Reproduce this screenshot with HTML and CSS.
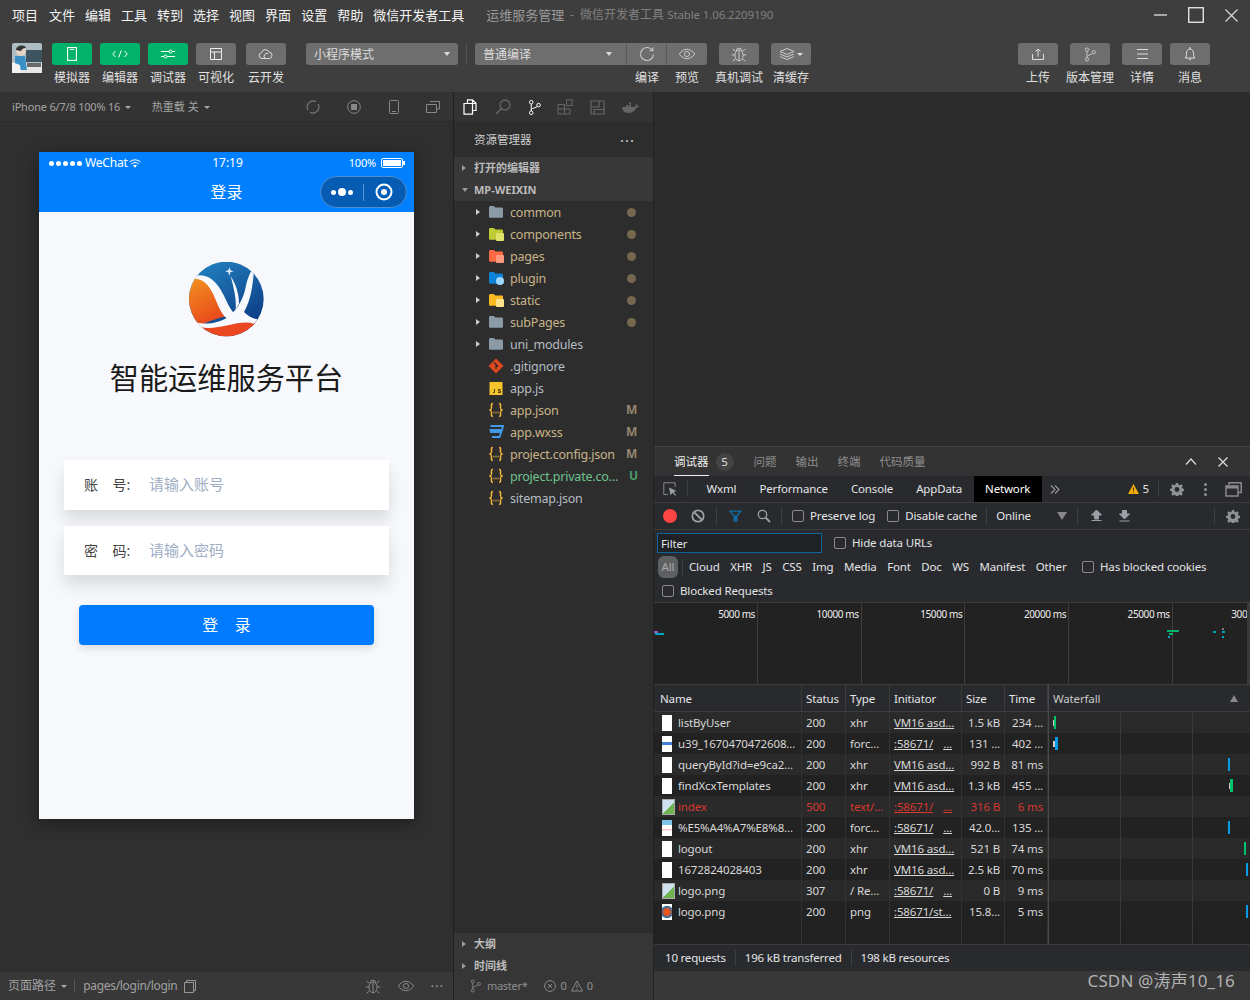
FILE: index.html
```html
<!DOCTYPE html>
<html lang="zh">
<head>
<meta charset="utf-8">
<title>微信开发者工具</title>
<link rel="stylesheet" href="styles.css">
</head>
<body>
<svg class="defs" width="0" height="0">
  <symbol id="folder" viewBox="0 0 16 14"><path d="M1 2.500C1 1.700 1.600 1 2.400 1h3.400l1.600 1.600h6.200c.8 0 1.400.6 1.400 1.400v7.400c0 .8-.6 1.400-1.400 1.400H2.400C1.600 12.800 1 12.200 1 11.400z" fill="currentColor"/></symbol>
  <symbol id="brace" viewBox="0 0 16 16"><path d="M5 1.500C3 1.500 3.500 3 3.500 5S3.500 7.500 1.500 8c2 .5 2 1 2 3s-.5 3.500 1.500 3.500M11 1.500c2 0 1.500 1.500 1.500 3.500s0 2.500 2 3c-2 .5-2 1-2 3s.5 3.500-1.500 3.500" fill="none" stroke="#f2b63c" stroke-width="1.500"/><path d="M5.500 10.500h1M7.500 10.500h1M9.500 10.500h1" stroke="#f2b63c" stroke-width="1.300"/></symbol>
  <symbol id="gear" viewBox="0 0 16 16"><path fill="currentColor" fill-rule="evenodd" d="M6.700 1h2.600l.4 2 1.300.6 1.800-1.100 1.800 1.800-1.100 1.800.6 1.300 1.900.4v2.600l-2 .4-.5 1.300 1.100 1.800-1.800 1.800-1.800-1.100-1.300.5-.4 1.900H6.700l-.4-2-1.300-.5-1.800 1.100-1.800-1.800 1.100-1.800-.5-1.300-2-.4V7.800l2-.4.5-1.300L1.400 4.300l1.800-1.800L5 3.600l1.300-.6zM8 5.700a2.800 2.800 0 1 0 0 5.600 2.800 2.800 0 0 0 0-5.600z"/></symbol>
  <symbol id="bug" viewBox="0 0 20 20"><g fill="none" stroke="currentColor" stroke-width="1.100"><ellipse cx="10" cy="11.500" rx="4.500" ry="6"/><path d="M7 6.500a3 3 0 0 1 6 0M10 6v11.500M5.500 11H2M14.500 11H18M6 7 3 4.500M14 7l3-2.500M6 15.500 3 18M14 15.500l3 2.500"/></g></symbol>
  <symbol id="eye" viewBox="0 0 20 14"><g fill="none" stroke="currentColor" stroke-width="1.100"><path d="M1 7c2.500-3.500 5.500-5.500 9-5.500S16.500 3.500 19 7c-2.500 3.500-5.500 5.500-9 5.500S3.500 10.500 1 7z"/><circle cx="10" cy="7" r="3"/></g></symbol>
  <symbol id="branch" viewBox="0 0 16 20"><g fill="none" stroke="currentColor" stroke-width="1.200"><circle cx="4" cy="3.500" r="2.200"/><circle cx="4" cy="16.500" r="2.200"/><circle cx="13" cy="7" r="2.200"/><path d="M4 5.700v8.600M4 13c1-3 6-2 7.500-4.500"/></g></symbol>
</svg>

<header class="titlebar">
  <nav class="menu">
    <span>项目</span><span>文件</span><span>编辑</span><span>工具</span><span>转到</span><span>选择</span><span>视图</span><span>界面</span><span>设置</span><span>帮助</span><span>微信开发者工具</span>
  </nav>
  <div class="wintitle"><span class="wt-main">运维服务管理</span><span class="wt-dash">-</span><span class="wt-sub">微信开发者工具 <span class="wt-ver">Stable 1.06.2209190</span></span></div>
  <div class="winctl">
    <svg class="wc-min" width="14" height="3" viewBox="0 0 14 3"><rect width="13" height="2" fill="#a8a8a8"/></svg>
    <svg class="wc-max" width="16" height="16" viewBox="0 0 16 16"><rect x=".75" y=".75" width="14.500" height="14.500" fill="none" stroke="#eee" stroke-width="1.300"/></svg>
    <svg class="wc-close" width="13" height="13" viewBox="0 0 13 13"><path d="M.5.500l12 12M12.500.500l-12 12" stroke="#ddd" stroke-width="1.100"/></svg>
  </div>
</header>

<section class="toolbar">
  <div class="avatar">
    <svg width="30" height="30" viewBox="0 0 30 30"><rect width="30" height="30" rx="2" fill="#aebcc4"/><rect x="14" y="7" width="16" height="12" fill="#3d5560"/><rect x="0" y="20" width="30" height="10" fill="#e6e6e6"/><rect x="15" y="20" width="14" height="4" fill="#6a6a6a"/><path d="M3 13h10l2 14H3z" fill="#3b8fc7"/><circle cx="9" cy="8" r="5" fill="#e4d2c2"/><path d="M4 7c0-5 9-6 10-2-3 0-4 1-5 3z" fill="#333"/><path d="M0 19l8 3 1 8H0z" fill="#f4f4f4"/></svg>
  </div>
  <div class="tool"><div class="btn green"><svg width="10" height="14" viewBox="0 0 10 14"><rect x=".6" y=".6" width="8.800" height="12.800" fill="none" stroke="#fff" stroke-width="1.100"/><path d="M3 2.500h4" stroke="#fff"/></svg></div><span class="tl">模拟器</span></div>
  <div class="tool"><div class="btn green"><svg width="16" height="8" viewBox="0 0 16 8"><path d="M3.500 1 .8 4l2.700 3M12.500 1l2.700 3-2.700 3M9.300.5 6.700 7.500" fill="none" stroke="#fff"/></svg></div><span class="tl">编辑器</span></div>
  <div class="tool"><div class="btn green"><svg width="14" height="10" viewBox="0 0 14 10"><g fill="none" stroke="#fff"><path d="M0 2.500h8M11 2.500h3M0 7.500h3M6 7.500h8"/><circle cx="9.500" cy="2.500" r="1.500"/><circle cx="4.500" cy="7.500" r="1.500"/></g></svg></div><span class="tl">调试器</span></div>
  <div class="tool m10"><div class="btn gray"><svg width="12" height="12" viewBox="0 0 12 12"><path d="M.5.500h11v11H.5zM.5 4h11M4.500 4v7.500" fill="none" stroke="#eee"/></svg></div><span class="tl">可视化</span></div>
  <div class="tool m20"><div class="btn gray"><svg width="16" height="12" viewBox="0 0 16 12"><path d="M4 10.500a3 3 0 0 1-.5-5.900A4 4 0 0 1 11 4a3.300 3.300 0 0 1 .5 6.500zM7 10.500a3 3 0 0 1 3-5" fill="none" stroke="#ddd"/></svg></div><span class="tl">云开发</span></div>

  <div class="select mode"><span class="sel-t">小程序模式</span><i class="caret"></i></div>
  <div class="vsep"></div>
  <div class="tool wide"><div class="btn gray lft select-in"><span class="sel-t">普通编译</span><i class="caret"></i></div></div>
  <div class="tool flush"><div class="btn gray mid"><svg width="16" height="16" viewBox="0 0 16 16"><path d="M13.500 4.500A6.500 6.500 0 1 0 14.500 8.500M13.800 1.500v3.300h-3.300" fill="none" stroke="#ccc" stroke-width="1.100"/></svg></div><span class="tl">编译</span></div>
  <div class="tool m12"><div class="btn gray rgt"><svg class="ic-eye" width="18" height="12"><use href="#eye"/></svg></div><span class="tl">预览</span></div>
  <div class="tool m12"><div class="btn gray"><svg class="ic-light" width="18" height="18"><use href="#bug"/></svg></div><span class="tl">真机调试</span></div>
  <div class="tool"><div class="btn gray"><svg width="16" height="12" viewBox="0 0 16 12"><path d="M8 .5 15 3.500 8 6.500 1 3.500zM1 6l7 3 7-3M1 8.500l7 3 7-3" fill="none" stroke="#ccc"/></svg><i class="caret small"></i></div><span class="tl">清缓存</span></div>

  <div class="toolbar-right">
    <div class="tool m12"><div class="btn gray"><svg width="12" height="12" viewBox="0 0 12 12"><path d="M.5 6v5.500h11V6M6 8.500V1M3.500 3.500 6 1l2.500 2.500" fill="none" stroke="#ddd"/></svg></div><span class="tl">上传</span></div>
    <div class="tool m12"><div class="btn gray"><svg class="ic-light" width="12" height="15"><use href="#branch"/></svg></div><span class="tl">版本管理</span></div>
    <div class="tool"><div class="btn gray"><svg width="11" height="10" viewBox="0 0 11 10"><path d="M0 .5h11M0 5h11M0 9.500h11" stroke="#ddd"/></svg></div><span class="tl">详情</span></div>
    <div class="tool"><div class="btn gray"><svg width="12" height="14" viewBox="0 0 12 14"><path d="M1 11c1.500-1 1.500-3 1.500-5S4 2 6 2s3.500 2 3.500 4 0 4 1.500 5zM6 0v2M5 12.500h2" fill="none" stroke="#ddd"/></svg></div><span class="tl">消息</span></div>
  </div>
</section>

<main class="main">
  <section class="sim">
    <div class="simbar">
      <span class="sb-device">iPhone 6/7/8 100% 16 <i class="caret small dim"></i></span>
      <span class="sb-hot">热重载 关 <i class="caret small dim"></i></span>
      <div class="sb-icons">
        <svg width="14" height="14" viewBox="0 0 14 14"><path d="M2 10A6 6 0 0 1 10 1.700M12 4a6 6 0 0 1-8 8.300" fill="none" stroke="#777" stroke-width="1.200"/></svg>
        <svg width="14" height="14" viewBox="0 0 14 14"><circle cx="7" cy="7" r="6.300" fill="none" stroke="#888"/><rect x="4" y="4" width="6" height="6" fill="#888"/></svg>
        <svg width="10" height="14" viewBox="0 0 10 14"><rect x=".5" y=".5" width="9" height="13" rx="1" fill="none" stroke="#888"/><path d="M3 11.500h4" stroke="#888"/></svg>
        <svg width="14" height="12" viewBox="0 0 14 12"><path d="M4 .5h9.500v7.500H11M.5 3.500H10.500v8H.5z" fill="none" stroke="#888"/></svg>
      </div>
    </div>
    <div class="simbody">
      <div class="phone">
        <div class="nav">
          <div class="statusrow">
            <span class="st-left"><span class="sig"><i></i><i></i><i></i><i></i><i></i></span>WeChat<svg width="12" height="9" viewBox="0 0 12 9"><path d="M.5 3a8 8 0 0 1 11 0M2.300 5a5.500 5.500 0 0 1 7.400 0" fill="none" stroke="#fff"/><path d="M4 6.600a3 3 0 0 1 4 0L6 8.800z" fill="#fff"/></svg></span>
            <span class="st-time">17:19</span>
            <span class="st-right">100%<span class="battery"><i></i></span></span>
          </div>
          <div class="titlerow">
            <span></span>
            <span class="navtitle">登录</span>
            <div class="capsule">
              <span class="c-dots"><i></i><i class="big"></i><i></i></span>
              <span class="c-sep"></span>
              <svg width="18" height="18" viewBox="0 0 18 18"><circle cx="9" cy="9" r="7.500" fill="none" stroke="#fff" stroke-width="2"/><circle cx="9" cy="9" r="3" fill="#fff"/></svg>
            </div>
          </div>
        </div>
        <div class="login">
          <svg class="logo" width="75" height="75" viewBox="0 0 225 225">
            <defs>
              <linearGradient id="lb" x1="0.200" y1="0" x2="0.800" y2="1"><stop offset="0" stop-color="#2280bf"/><stop offset="1" stop-color="#0a357f"/></linearGradient>
              <linearGradient id="lo" x1="0.200" y1="0" x2="0.600" y2="1"><stop offset="0" stop-color="#f2901f"/><stop offset="1" stop-color="#e8431c"/></linearGradient>
              <clipPath id="lc"><circle cx="112" cy="111" r="112"/></clipPath>
            </defs>
            <g clip-path="url(#lc)">
              <rect width="225" height="225" fill="url(#lb)"/>
              <path d="M-5 45 35 45C70 55 85 110 115 162 80 170 40 185 20 195L-5 195Z" fill="url(#lo)"/>
              <path d="M20 190C80 205 150 165 205 180L170 240 60 240Z" fill="#ea4620"/>
              <path d="M15 42C60 30 90 65 110 112 120 135 130 150 142 162L112 168C92 150 85 122 72 95 58 68 45 52 18 50Z" fill="#f8f9fc"/>
              <path d="M125 42C135 60 150 85 150 125L140 142C143 115 135 80 125 42Z" fill="#f8f9fc"/>
              <path d="M15 180C60 192 105 178 125 158 145 140 160 115 168 85 172 62 178 42 188 24L195 30C190 70 188 110 165 150 178 163 190 170 207 172L195 185C150 170 90 208 32 195Z" fill="#f8f9fc"/>
              <path d="M121 15 124 25 134 28 124 31 121 42 118 31 108 28 118 25Z" fill="#dcebf6"/>
            </g>
          </svg>
          <h1 class="apptitle">智能运维服务平台</h1>
          <div class="field"><span class="f-label">账&nbsp;&nbsp;&nbsp;&nbsp;号:</span><span class="f-ph">请输入账号</span></div>
          <div class="field"><span class="f-label">密&nbsp;&nbsp;&nbsp;&nbsp;码:</span><span class="f-ph">请输入密码</span></div>
          <div class="submit">登&nbsp;&nbsp;&nbsp;&nbsp;录</div>
        </div>
      </div>
    </div>
    <footer class="simstatus">
      <span class="ss-path">页面路径 <i class="caret small dim"></i></span>
      <span class="ss-sep"></span>
      <span class="ss-page">pages/login/login</span>
      <svg class="ss-copy" width="12" height="13" viewBox="0 0 12 13"><path d="M2.500 2.500V.5h9v10h-1.500M.5 2.500h9v10h-9z" fill="none" stroke="#999"/></svg>
      <div class="ss-icons">
        <svg class="ic-dim" width="18" height="18"><use href="#bug"/></svg>
        <svg class="ic-dim" width="18" height="12"><use href="#eye"/></svg>
        <span class="ss-dots">···</span>
      </div>
    </footer>
  </section>

  <aside class="explorer">
    <div class="ex-icons">
      <svg width="16" height="16" viewBox="0 0 16 16"><path d="M5.500 4V.8h5l3.500 3.500v7.200h-3M2 4.500h8.500v10.700H2zM10.500 1v3.500H14" fill="none" stroke="#fff" stroke-width="1.200"/></svg>
      <svg width="16" height="16" viewBox="0 0 16 16"><circle cx="10" cy="6" r="5" fill="none" stroke="#666" stroke-width="1.300"/><path d="M6.500 9.500 1 15" stroke="#666" stroke-width="1.500"/></svg>
      <svg class="ic-white" width="13" height="17"><use href="#branch"/></svg>
      <svg width="16" height="16" viewBox="0 0 16 16"><path d="M1 5.500h6.500v9.500H1zM1 10h6.500M7.500 10H13v5H7.500zM9.500.8h5.700v5.700H9.500z" fill="none" stroke="#666"/></svg>
      <svg width="15" height="15" viewBox="0 0 15 15"><path d="M1 1h13v13H1zM1 7h8V1M4 14V9.500h10" fill="none" stroke="#666" stroke-width="1.200"/></svg>
      <svg width="17" height="12" viewBox="0 0 17 12"><path d="M0 6h13c.5-1 1-2 1-3 1 .5 1.500 1.500 1.500 2H17c-.5 1-1.500 1.500-2.500 1.500C13 10 10 12 6 12 2 12 .5 9 0 6z" fill="#666"/><path d="M4 4h2v2H4zM7 4h2v2H7zM7 1.500h2v2H7z" fill="#666"/></svg>
    </div>
    <div class="ex-title"><span>资源管理器</span><span class="ex-dots">···</span></div>
    <div class="ex-section"><i class="tri-r"></i>打开的编辑器</div>
    <div class="ex-section"><i class="tri-d"></i>MP-WEIXIN</div>
    <ul class="tree">
      <li class="node mod"><i class="tri-r w"></i><svg class="fo grey" width="16" height="14"><use href="#folder"/></svg><span class="name">common</span><i class="dot"></i></li>
      <li class="node mod"><i class="tri-r w"></i><span class="fo-wrap lime"><svg width="16" height="14"><use href="#folder"/></svg><b class="bdg sq"></b></span><span class="name">components</span><i class="dot"></i></li>
      <li class="node mod"><i class="tri-r w"></i><span class="fo-wrap red"><svg width="16" height="14"><use href="#folder"/></svg><b class="bdg pg"></b></span><span class="name">pages</span><i class="dot"></i></li>
      <li class="node mod"><i class="tri-r w"></i><span class="fo-wrap blue"><svg width="16" height="14"><use href="#folder"/></svg><b class="bdg pl"></b></span><span class="name">plugin</span><i class="dot"></i></li>
      <li class="node mod"><i class="tri-r w"></i><span class="fo-wrap amber"><svg width="16" height="14"><use href="#folder"/></svg><b class="bdg st"></b></span><span class="name">static</span><i class="dot"></i></li>
      <li class="node mod"><i class="tri-r w"></i><svg class="fo grey" width="16" height="14"><use href="#folder"/></svg><span class="name">subPages</span><i class="dot"></i></li>
      <li class="node"><i class="tri-r w"></i><svg class="fo grey" width="16" height="14"><use href="#folder"/></svg><span class="name">uni_modules</span></li>
      <li class="node file"><svg class="fi" width="16" height="16" viewBox="0 0 16 16"><path d="M8 .5 15.500 8 8 15.500.5 8z" fill="#e0481f"/><path d="M6 4.500 8 6.500M8 6.500V11M8 6.500l2 2" stroke="#2d2d2d" stroke-width="1.200"/></svg><span class="name">.gitignore</span></li>
      <li class="node file"><svg class="fi" width="13" height="13" viewBox="0 0 13 13"><rect width="13" height="13" fill="#f5c32c"/><path d="M5 7v3.500H3.500M11 7.500H9v1.500h2v1.500H8.500" fill="none" stroke="#4a3b05"/></svg><span class="name">app.js</span></li>
      <li class="node file mod"><svg class="fi" width="16" height="16"><use href="#brace"/></svg><span class="name">app.json</span><b class="git m">M</b></li>
      <li class="node file mod"><svg class="fi" width="14" height="14" viewBox="0 0 14 14"><path d="M1.500 1H14l-1 4H.5M1 7h11M3 12h7.500L13 5" fill="none" stroke="#3f9bea" stroke-width="1.800"/></svg><span class="name">app.wxss</span><b class="git m">M</b></li>
      <li class="node file mod"><svg class="fi" width="16" height="16"><use href="#brace"/></svg><span class="name">project.config.json</span><b class="git m">M</b></li>
      <li class="node file new"><svg class="fi" width="16" height="16"><use href="#brace"/></svg><span class="name">project.private.co...</span><b class="git u">U</b></li>
      <li class="node file"><svg class="fi" width="16" height="16"><use href="#brace"/></svg><span class="name">sitemap.json</span></li>
    </ul>
    <div class="ex-bottom">
      <div class="ex-section flat"><i class="tri-r"></i>大纲</div>
      <div class="ex-section flat"><i class="tri-r"></i>时间线</div>
      <div class="ex-status">
        <svg class="ic-dim ic-b" width="11" height="14"><use href="#branch"/></svg>
        <span class="st-branch">master*</span>
        <svg class="st-err" width="12" height="12" viewBox="0 0 12 12"><circle cx="6" cy="6" r="5.400" fill="none" stroke="#888"/><path d="M4 4l4 4M8 4l-4 4" stroke="#888"/></svg>
        <span>0</span>
        <svg width="12" height="12" viewBox="0 0 12 12"><path d="M6 1 11.500 11H.5zM6 4.500v3.500M6 9v1" fill="none" stroke="#888"/></svg>
        <span>0</span>
      </div>
    </div>
  </aside>

  <section class="rightpane">
    <div class="blank"></div>
    <div class="devtools">
      <div class="dt-tabs">
        <span class="dt-tab on">调试器</span><span class="badge">5</span>
        <span class="dt-tab">问题</span><span class="dt-tab">输出</span><span class="dt-tab">终端</span><span class="dt-tab">代码质量</span>
        <div class="dt-tabctl">
          <svg width="12" height="7" viewBox="0 0 12 7"><path d="M1 6.500 6 1l5 5.500" fill="none" stroke="#ddd" stroke-width="1.200"/></svg>
          <svg width="10" height="10" viewBox="0 0 10 10"><path d="M.5.500l9 9M9.500.500l-9 9" stroke="#ddd" stroke-width="1.200"/></svg>
        </div>
      </div>
      <div class="cd-row cd-tabs">
        <svg class="cd-insp" width="14" height="14" viewBox="0 0 14 14"><path d="M5 12.500H.8V.8h11.400V5" fill="none" stroke="#888"/><path d="M6 5.500 13.500 9l-3 1 2.500 3-1 .8-2.500-3-2 2.500z" fill="#9aa0a6"/></svg>
        <span class="cd-sep first"></span>
        <span class="cd-tab">Wxml</span><span class="cd-tab">Performance</span><span class="cd-tab">Console</span><span class="cd-tab">AppData</span><span class="cd-tab act">Network</span>
        <svg class="cd-more" width="10" height="9" viewBox="0 0 10 9"><path d="M1 .5l4 4-4 4M5 .5l4 4-4 4" fill="none" stroke="#999" stroke-width="1.100"/></svg>
        <div class="cd-end">
          <svg width="11" height="10" viewBox="0 0 11 10"><path d="M5.500 0 11 10H0z" fill="#f2ab00"/><path d="M5.500 3.500v3M5.500 7.500v1" stroke="#333"/></svg>
          <span class="warnnum">5</span>
          <span class="cd-sep"></span>
          <svg class="ic-grey" width="14" height="14"><use href="#gear"/></svg>
          <span class="cd-kebab"><i></i><i></i><i></i></span>
          <svg width="17" height="15" viewBox="0 0 17 15"><path d="M4 3V.8h12.200v9.700H13.500" fill="none" stroke="#8a8a8a" stroke-width="1.500"/><rect x="1" y="4" width="12" height="10" fill="none" stroke="#8a8a8a" stroke-width="1.500"/><rect x="1" y="4" width="12" height="2.500" fill="#8a8a8a"/></svg>
        </div>
      </div>
      <div class="cd-row cd-net">
        <i class="rec"></i>
        <svg class="nt-block" width="14" height="14" viewBox="0 0 14 14"><circle cx="7" cy="7" r="5.700" fill="none" stroke="#9aa0a6" stroke-width="1.800"/><path d="M3 3l8 8" stroke="#9aa0a6" stroke-width="1.800"/></svg>
        <span class="cd-sep"></span>
        <svg class="nt-filter" width="15" height="12" viewBox="0 0 15 12"><path d="M.5.500h14l-5 5.500v5.500h-4V6z" fill="#0f6ea8"/><path d="M3.500 1.800h8L8.200 5.500H6.800z" fill="#292a2d"/></svg>
        <svg class="nt-search" width="14" height="14" viewBox="0 0 14 14"><circle cx="5.500" cy="5.500" r="4.200" fill="none" stroke="#9aa0a6" stroke-width="1.300"/><path d="M8.500 8.500 13 13" stroke="#9aa0a6" stroke-width="1.800"/></svg>
        <span class="cd-sep"></span>
        <label class="ck"><i class="cb"></i>Preserve log</label>
        <label class="ck"><i class="cb"></i>Disable cache</label>
        <span class="cd-sep"></span>
        <span class="online">Online</span><i class="caret grey"></i>
        <span class="cd-sep"></span>
        <svg class="nt-up" width="11" height="12" viewBox="0 0 11 12"><path d="M5.500 0 10.500 5H7.500v4h-4V5H.5zM.5 10.500h10" fill="#9aa0a6" stroke="#9aa0a6"/></svg>
        <svg class="nt-down" width="11" height="12" viewBox="0 0 11 12"><path d="M3.500 0h4v4h3l-5 5-5-5h3zM.5 11h10" fill="#9aa0a6" stroke="#9aa0a6"/></svg>
        <span class="cd-sep push"></span>
        <svg class="ic-grey nt-gear" width="14" height="14"><use href="#gear"/></svg>
      </div>
      <div class="filter-panel">
        <div class="fp-row">
          <div class="filter-input">Filter</div>
          <label class="ck"><i class="cb"></i>Hide data URLs</label>
        </div>
        <div class="fp-row types">
          <span class="all">All</span><span class="t-sep"></span>
          <span>Cloud</span><span>XHR</span><span>JS</span><span>CSS</span><span>Img</span><span>Media</span><span>Font</span><span>Doc</span><span>WS</span><span>Manifest</span><span>Other</span>
          <label class="ck hb"><i class="cb"></i>Has blocked cookies</label>
        </div>
        <div class="fp-row blocked"><label class="ck"><i class="cb"></i>Blocked Requests</label></div>
      </div>
      <div class="overview">
        <div class="ov-cell"><span>5000 ms</span></div><div class="ov-cell"><span>10000 ms</span></div><div class="ov-cell"><span>15000 ms</span></div><div class="ov-cell"><span>20000 ms</span></div><div class="ov-cell"><span>25000 ms</span></div><div class="ov-cell"><span>30000 ms</span></div>
        <i class="ov-mark c1" style="left:0;top:28px;width:4px"></i><i class="ov-mark c2" style="left:1px;top:30px;width:9px"></i>
        <i class="ov-mark c3" style="left:513px;top:27px;width:12px"></i><i class="ov-mark c3" style="left:515px;top:30px;width:4px"></i><i class="ov-mark c2" style="left:514px;top:33px;width:2px"></i>
        <i class="ov-mark c2" style="left:559px;top:28px;width:3px"></i><i class="ov-mark c2" style="left:568px;top:28px;width:3px"></i><i class="ov-mark c2" style="left:568px;top:33px;width:2px"></i><i class="ov-mark c4" style="left:568px;top:25px;width:2px"></i>
      </div>
      <div class="table">
        <div class="tr th"><span class="td">Name</span><span class="td">Status</span><span class="td">Type</span><span class="td">Initiator</span><span class="td">Size</span><span class="td">Time</span><span class="td wf-h">Waterfall<i class="sort"></i></span></div>
        <div class="tr"><span class="td nm"><i class="ficon"></i>listByUser</span><span class="td">200</span><span class="td">xhr</span><span class="td ln">VM16 asd...</span><span class="td r">1.5 kB</span><span class="td r">234 ...</span><span class="td wf"><i class="bar gr" style="left:4px;width:2px"></i><i class="bar gn" style="left:5px;width:2px"></i></span></div>
        <div class="tr"><span class="td nm"><i class="ficon fi-band"></i>u39_1670470472608...</span><span class="td">200</span><span class="td">forc...</span><span class="td ln">:58671/<u class="gap"></u>...</span><span class="td r">131 ...</span><span class="td r">402 ...</span><span class="td wf"><i class="bar gr" style="left:4px;width:2px"></i><i class="bar bl" style="left:6px;width:3px"></i></span></div>
        <div class="tr"><span class="td nm"><i class="ficon"></i>queryById?id=e9ca2...</span><span class="td">200</span><span class="td">xhr</span><span class="td ln">VM16 asd...</span><span class="td r">992 B</span><span class="td r">81 ms</span><span class="td wf"><i class="bar bl" style="left:179px;width:2px"></i></span></div>
        <div class="tr"><span class="td nm"><i class="ficon"></i>findXcxTemplates</span><span class="td">200</span><span class="td">xhr</span><span class="td ln">VM16 asd...</span><span class="td r">1.3 kB</span><span class="td r">455 ...</span><span class="td wf"><i class="bar gr" style="left:180px;width:2px"></i><i class="bar gn" style="left:181px;width:3px"></i></span></div>
        <div class="tr err"><span class="td nm"><i class="ficon fi-img"></i>index</span><span class="td">500</span><span class="td">text/...</span><span class="td ln">:58671/<u class="gap"></u>...</span><span class="td r">316 B</span><span class="td r">6 ms</span><span class="td wf"></span></div>
        <div class="tr"><span class="td nm"><i class="ficon fi-pic"></i>%E5%A4%A7%E8%8...</span><span class="td">200</span><span class="td">forc...</span><span class="td ln">:58671/<u class="gap"></u>...</span><span class="td r">42.0...</span><span class="td r">135 ...</span><span class="td wf"><i class="bar bl" style="left:179px;width:2px"></i></span></div>
        <div class="tr"><span class="td nm"><i class="ficon"></i>logout</span><span class="td">200</span><span class="td">xhr</span><span class="td ln">VM16 asd...</span><span class="td r">521 B</span><span class="td r">74 ms</span><span class="td wf"><i class="bar gn" style="left:195px;width:2px"></i></span></div>
        <div class="tr"><span class="td nm"><i class="ficon"></i>1672824028403</span><span class="td">200</span><span class="td">xhr</span><span class="td ln">VM16 asd...</span><span class="td r">2.5 kB</span><span class="td r">70 ms</span><span class="td wf"><i class="bar bl" style="left:197px;width:2px"></i></span></div>
        <div class="tr"><span class="td nm"><i class="ficon fi-img"></i>logo.png</span><span class="td">307</span><span class="td">/ Re...</span><span class="td ln">:58671/<u class="gap"></u>...</span><span class="td r">0 B</span><span class="td r">9 ms</span><span class="td wf"></span></div>
        <div class="tr"><span class="td nm"><i class="ficon fi-logo"></i>logo.png</span><span class="td">200</span><span class="td">png</span><span class="td ln">:58671/st...</span><span class="td r">15.8...</span><span class="td r">5 ms</span><span class="td wf"><i class="bar bl" style="left:197px;width:2px"></i></span></div>
        <div class="tr filler"><span class="td"></span><span class="td"></span><span class="td"></span><span class="td"></span><span class="td"></span><span class="td"></span><span class="td wf"></span></div>
      </div>
      <div class="summary"><span>10 requests</span><span>196 kB transferred</span><span>198 kB resources</span></div>
    </div>
    <footer class="rightfoot"><span class="watermark">CSDN @涛声10_16</span></footer>
  </section>
</main>
</body>
</html>
```

FILE: styles.css
```css
* { box-sizing: border-box; }
html, body { margin: 0; padding: 0; }
body {
  width: 1250px; height: 1000px; overflow: hidden;
  display: flex; flex-direction: column;
  background: #2d2d2d; color: #ddd;
  font: 12px/16px "Noto Sans", "Noto Sans CJK SC", sans-serif;
}
.defs { position: absolute; }
i { display: inline-block; font-style: normal; }
ul { list-style: none; margin: 0; padding: 0; }

/* title bar */
.titlebar { height: 30px; background: #3e3e3e; display: flex; align-items: center; padding-left: 12px; flex: none; }
.menu { display: flex; gap: 10px; font-size: 13px; color: #f4f4f4; }
.menu span:first-child { margin-right: 1px; }
.wintitle { margin-left: 22px; color: #808080; font-size: 12px; white-space: pre; display: flex; align-items: center; }
.wt-main { font-size: 13px; color: #9a9a9a; }
.wt-dash { margin: 0 6px; }
.wt-ver { font-size: 11.500px; letter-spacing: -.12px; }
.winctl { margin-left: auto; display: flex; align-items: center; }
.wc-min { margin-right: 20px; }
.wc-max { margin-right: 21px; }
.wc-close { margin-right: 12px; }

/* tool bar */
.toolbar { height: 62px; background: #3e3e3e; display: flex; align-items: flex-start; padding-top: 13px; flex: none; padding-left: 12px; }
.avatar { width: 30px; height: 30px; margin-right: 10px; }
.tool { width: 40px; display: flex; flex-direction: column; align-items: center; margin-right: 8px; }
.tool.m10 { margin-right: 10px; }
.tool.m12 { margin-right: 12px; }
.tool.m20 { margin-right: 20px; }
.tool.flush { margin-right: 0; }
.btn { width: 40px; height: 22px; border-radius: 3px; display: flex; align-items: center; justify-content: center; flex: none; }
.btn.green { background: #00b26a; }
.btn.gray { background: #6e6e6e; }
.tl { margin-top: 5px; line-height: 16px; white-space: nowrap; color: #e0e0e0; font-size: 12px; }
.caret { width: 0; height: 0; border: 3.500px solid transparent; border-top: 4px solid #ddd; border-bottom: 0; }
.caret.small { border-width: 3px; border-top-width: 3.500px; border-bottom-width: 0; margin-left: 2px; vertical-align: middle; }
.caret.dim { border-top-color: #aaa; }
.caret.grey { border-width: 5px; border-top-width: 8px; border-bottom-width: 0; border-top-color: #888; margin-left: 26px; }
.select { width: 152px; height: 22px; background: #6e6e6e; border-radius: 3px; display: flex; align-items: center; justify-content: space-between; padding: 0 8px; color: #ddd; }
.sel-t { padding-top: 2px; }
.vsep { width: 1px; height: 22px; background: #555; margin: 0 8px; }
.tool.wide { width: 152px; margin-right: 0; }
.select-in { width: 152px; justify-content: space-between; padding: 0 14px 0 8px; color: #ddd; border-radius: 3px 0 0 3px; border-right: 1px solid #5a5a5a; }
.btn.gray.select-in { justify-content: space-between; }
.btn.mid { border-radius: 0; border-right: 1px solid #5a5a5a; }
.btn.rgt { border-radius: 0 3px 3px 0; }
.ic-eye, .ic-light { color: #ccc; }
.ic-dim { color: #8a8a8a; }
.ic-white { color: #fff; }
.ic-grey { color: #8e9196; }
.toolbar-right { margin-left: auto; display: flex; padding-right: 32px; }

/* main */
.main { flex: 1; display: flex; min-height: 0; }

/* simulator */
.sim { width: 454px; flex: none; display: flex; flex-direction: column; background: #2f2f2f; border-right: 1px solid #1f1f1f; }
.simbar { height: 30px; flex: none; background: #333; display: flex; align-items: center; padding-left: 12px; font-size: 11px; color: #a4a4a4; border-bottom: 1px solid #2a2a2a; }
.sb-device { letter-spacing: -.2px; }
.sb-hot { margin-left: 21px; letter-spacing: 0; }
.sb-icons { margin-left: auto; margin-right: 13px; width: 134px; display: flex; align-items: center; justify-content: space-between; }
.simbody { flex: 1; padding: 30px 39px 0; min-height: 0; }
.phone { width: 375px; height: 667px; background: #f7f8fb; box-shadow: 0 4px 16px rgba(0,0,0,.4); display: flex; flex-direction: column; }
.nav { height: 60px; background: #007fff; color: #fff; flex: none; }
.statusrow { height: 20px; display: grid; grid-template-columns: 1fr auto 1fr; align-items: center; padding: 2px 8px 0 10px; font-size: 12px; }
.st-left { display: flex; align-items: center; letter-spacing: -.2px; }
.sig { display: flex; gap: 2px; margin-right: 3px; }
.sig i { width: 5px; height: 5px; border-radius: 50%; background: #fff; }
.st-left svg { margin-left: 1px; }
.st-right { justify-self: end; display: flex; align-items: center; gap: 5px; font-size: 11px; letter-spacing: -.2px; padding-right: 3px; }
.battery { width: 22px; height: 10px; border: 1px solid #fff; border-radius: 2px; padding: 1px; position: relative; display: block; }
.battery::after { content: ""; position: absolute; right: -3px; top: 2px; width: 2px; height: 4px; background: #fff; }
.battery i { display: block; height: 100%; background: #fff; }
.titlerow { height: 40px; display: grid; grid-template-columns: 1fr auto 1fr; align-items: center; }
.navtitle { font-size: 16px; }
.capsule { justify-self: end; margin-right: 7px; width: 87px; height: 32px; border-radius: 16px; background: #055cb2; border: 1px solid #4c8fd2; display: flex; align-items: center; padding-left: 10px; }
.c-dots { display: flex; align-items: center; gap: 2px; width: 22px; }
.c-dots i { width: 5px; height: 5px; background: #fff; border-radius: 50%; }
.c-dots i.big { width: 8px; height: 8px; }
.c-sep { width: 1px; height: 17px; background: #5a93cc; margin: 0 11px 0 10px; }
.login { flex: 1; display: flex; flex-direction: column; align-items: center; padding-top: 50px; }
.logo { flex: none; display: block; }
.apptitle { margin: 21px 0 0; font-size: 29.200px; line-height: 40px; font-weight: 400; color: #1a1a1a; }
.field { width: 325px; height: 50px; background: #fff; box-shadow: 0 10px 16px rgba(0,0,0,.12); display: flex; align-items: center; padding-left: 20px; margin-top: 16px; font-size: 14px; flex: none; }
.apptitle + .field { margin-top: 62px; }
.field + .field { height: 49px; }
.f-label { width: 65px; color: #444; white-space: nowrap; }
.f-ph { color: #a0aec4; font-size: 15px; margin-top: -2px; }
.submit { width: 295px; height: 40px; margin-top: 30px; background: #007aff; border-radius: 4px; color: #fff; text-align: center; line-height: 40px; font-size: 16px; box-shadow: 0 3px 8px rgba(0,0,0,.12); }
.simstatus { height: 28px; flex: none; background: #383838; display: flex; align-items: center; padding-left: 8px; color: #a0a0a0; font-size: 12px; }
.ss-sep { width: 1px; height: 14px; background: #555; margin: 0 8px 0 7px; }
.ss-page { font-size: 12px; letter-spacing: -.3px; }
.ss-copy { margin-left: 7px; }
.ss-icons { margin-left: auto; display: flex; align-items: center; gap: 15px; padding-right: 9px; }
.ss-dots { font-size: 13px; letter-spacing: 1px; margin-left: 1px; }

/* explorer */
.explorer { width: 200px; flex: none; display: flex; flex-direction: column; background: #2d2d2d; border-right: 1px solid #222; }
.ex-icons { height: 30px; flex: none; background: #333; display: flex; align-items: center; justify-content: space-between; padding: 0 14px 0 8px; }
.ex-title { height: 35px; flex: none; display: flex; align-items: center; justify-content: space-between; padding: 0 18px 0 20px; color: #ccc; font-size: 11.500px; }
.ex-dots { font-size: 15px; color: #ccc; letter-spacing: 1px; }
.ex-section { height: 22px; flex: none; background: #383838; display: flex; align-items: center; padding-left: 8px; font-weight: 700; font-size: 11px; color: #bbb; }
.tri-r { width: 0; height: 0; border: 3px solid transparent; border-left: 4px solid #999; border-right: 0; margin-right: 8px; }
.tri-r.w { border-left-color: #ccc; margin: 0 8px 0 22px; flex: none; }
.tri-d { width: 0; height: 0; border: 3.500px solid transparent; border-top: 4px solid #999; border-bottom: 0; margin-right: 6px; }
.tree { flex: none; }
.node { height: 22px; display: flex; align-items: center; font-size: 12.500px; letter-spacing: -.2px; color: #b4bcc2; position: relative; }
.node.mod .name { color: #c9b489; }
.node.new .name { color: #6dc28f; }
.node.file { padding-left: 34px; }
.name { margin-left: 6px; white-space: nowrap; padding-top: 1px; }
.fo { flex: none; margin-left: 0; }
.fo.grey { color: #8b9ba6; }
.fo-wrap { position: relative; width: 16px; height: 14px; flex: none; display: block; }
.fo-wrap svg { display: block; }
.lime { color: #c0ca33; } .red { color: #ff6a45; } .blue { color: #0b83d6; } .amber { color: #fbba21; }
.bdg { position: absolute; right: 0; bottom: 0; width: 8px; height: 8px; border-radius: 1px; }
.bdg.sq { background: #dde36b; }
.bdg.pg { background: #ff9a80; }
.bdg.pl { background: #9fd8ff; border-radius: 50%; }
.bdg.st { background: #ffe28a; }
.fi { flex: none; width: 16px; }
.dot { position: absolute; left: 173px; width: 9px; height: 9px; border-radius: 50%; background: #75684f; }
.git { position: absolute; left: 172px; font-size: 12px; font-weight: 700; letter-spacing: 0; }
.git.m { color: #948670; }
.git.u { left: 175px; color: #4e9a6e; }
.ex-bottom { margin-top: auto; background: #363636; display: flex; flex-direction: column; }
.ex-section.flat { background: transparent; }
.ex-status { height: 23px; display: flex; align-items: center; gap: 4px; padding: 0 0 5px 16px; color: #8f8f8f; font-size: 11px; }
.ic-b { margin-right: 2px; }
.st-branch { letter-spacing: -.3px; }
.st-err { margin-left: 13px; }

/* right */
.rightpane { flex: 1; display: flex; flex-direction: column; min-width: 0; }
.blank { flex: 1; background: #2c2c2c; }
.devtools { height: 525px; flex: none; display: flex; flex-direction: column; background: #292a2d; color: #e3e5e8; }
.dt-tabs { height: 30px; flex: none; background: #333; border-top: 1px solid #444; display: flex; align-items: center; padding-left: 20px; color: #8e8e8e; font-size: 11.500px; }
.dt-tab { margin-right: 19px; height: 29px; line-height: 29px; white-space: nowrap; }
.dt-tab.on { color: #eee; margin-right: 7px; border-bottom: 1px solid #eee; }
.badge { width: 18px; height: 18px; border-radius: 50%; background: #444; color: #ddd; text-align: center; line-height: 18px; margin-right: 20px; }
.dt-tabctl { margin-left: auto; display: flex; align-items: center; gap: 21px; padding-right: 22px; }
.cd-row { height: 27px; flex: none; display: flex; align-items: center; border-bottom: 1px solid #3d3d3d; font-size: 11.500px; letter-spacing: -.15px; }
.cd-tabs { padding-left: 9px; }
.cd-insp { flex: none; margin-right: 10px; }
.cd-sep { width: 1px; height: 16px; background: #3f4044; flex: none; }
.cd-sep.first { margin-right: 7px; }
.cd-sep.push { margin-left: auto; }
.cd-tab { padding: 0 11.500px; height: 26px; line-height: 26px; }
.cd-tab.act { background: #000; color: #fff; }
.cd-more { margin-left: 8px; }
.cd-end { margin-left: auto; display: flex; align-items: center; padding-right: 8px; }
.warnnum { margin-left: 4px; margin-right: 9px; }
.cd-end .cd-sep { margin-right: 11px; }
.cd-kebab { display: flex; flex-direction: column; gap: 2px; margin: 0 18px 0 20px; }
.cd-kebab i { width: 3px; height: 3px; border-radius: 50%; background: #8e9196; }
.rec { width: 14px; height: 14px; border-radius: 50%; background: #f44; margin-left: 9px; flex: none; }
.nt-block { margin-left: 14px; margin-right: 11px; }
.nt-filter { margin-left: 11px; }
.nt-search { margin-left: 14px; margin-right: 10px; }
.ck { display: flex; align-items: center; white-space: nowrap; }
.cb { width: 12px; height: 12px; border: 1px solid #8a8a8a; border-radius: 2px; margin-right: 6px; flex: none; }
.cd-net .ck { margin-left: 10px; }
.cd-net .ck + .ck { margin-left: 12px; }
.cd-net .ck + .cd-sep { margin-left: 9px; }
.online { margin-left: 9px; }
.caret.grey + .cd-sep { margin-left: 10px; }
.nt-up { margin-left: 13px; }
.nt-down { margin-left: 17px; }
.nt-gear { margin-left: 11px; margin-right: 10px; }
.filter-panel { height: 73px; flex: none; border-bottom: 1px solid #3d3d3d; display: flex; flex-direction: column; font-size: 11.500px; letter-spacing: -.15px; }
.fp-row { display: flex; align-items: center; white-space: nowrap; }
.fp-row:first-child { height: 25px; padding-left: 3px; }
.filter-input { width: 165px; height: 20px; background: #202124; border: 1px solid #0e639c; padding-left: 3px; line-height: 19px; margin-right: 12px; }
.types { height: 24px; padding-left: 4px; gap: 10.500px; }
.all { width: 20px; height: 22px; border-radius: 6px; background: #5f6063; color: #aaa; text-align: center; line-height: 22px; flex: none; }
.t-sep { width: 1px; height: 16px; background: #3f4044; margin: 0 -4px 0 -7px; }
.hb { margin-left: 5px; }
.blocked { height: 23px; padding-left: 8px; }
.overview { height: 82px; flex: none; background: #222; display: flex; position: relative; overflow: hidden; border-bottom: 1px solid #3d3d3d; border-right: 3px solid #3a3a3a; }
.ov-cell { flex: 0 0 103.700px; border-right: 1px solid #3d3d3d; text-align: right; padding: 4px 2px 0 0; font-size: 10px; letter-spacing: -.4px; line-height: 15px; color: #eee; white-space: nowrap; }
.ov-cell:first-child { flex-basis: 104px; }
.ov-mark { position: absolute; height: 2px; }
.c1 { background: #9b59b6; } .c2 { background: #00a3c4; } .c3 { background: #00b26a; } .c4 { background: #777; }

/* table */
.table { flex: 1; display: flex; flex-direction: column; min-height: 0; background: #222; letter-spacing: -.15px; }
.tr { height: 21px; flex: none; display: grid; grid-template-columns: 148px 44px 44px 72px 43px 43px 1fr; align-items: stretch; color: #d8d8d8; background: #222; font-size: 11.500px; line-height: 21px; }
.tr:nth-child(even) { background: #2a2a2a; }
.th { height: 27px; line-height: 27px; background: #292a2d; color: #e3e5e8; border-bottom: 1px solid #3d3d3d; }
.tr.th:nth-child(even), .tr.th { background: #292a2d; }
.td { border-right: 1px solid #333; padding: 0 4px; white-space: nowrap; overflow: hidden; position: relative; }
.th .td { border-right-color: #3d3d3d; }
.th .td:first-child { padding-left: 6px; }
.td:last-child { border-right: 0; border-left: 1px solid #4a4a4a; }
.r { text-align: right; }
.nm { padding-left: 8px; display: flex; align-items: center; }
.ln { text-decoration: underline; }
.gap { display: inline-block; width: 10px; text-decoration: underline; }
.wf { padding: 0; background-image: linear-gradient(#3a3a3a,#3a3a3a), linear-gradient(#3a3a3a,#3a3a3a); background-size: 1px 100%; background-position: 71px 0, 143px 0; background-repeat: no-repeat; }
.wf-h { padding-left: 4px; color: #c8c8c8; }
.sort { position: absolute; right: 12px; top: 10px; width: 0; height: 0; border: 4px solid transparent; border-bottom: 7px solid #888; border-top: 0; }
.bar { position: absolute; top: 4px; height: 13px; }
.bar.gr { background: #ccc; height: 6px; top: 8px; }
.bar.gn { background: #00c26c; }
.bar.bl { background: #0a9be8; }
.ficon { width: 10px; height: 16px; background: #fff; margin-right: 6px; flex: none; }
.fi-band { background: linear-gradient(#fff 6px,#3f7fd8 6px,#3f7fd8 9px,#fff 9px); }
.fi-img { background: linear-gradient(135deg,#cfe0f0 55%,#6fb34e 55%); border: 1px solid #aaa; width: 13px; margin-right: 3px; }
.fi-pic { background: linear-gradient(#7cc4e8 5px,#fff 5px,#fff 9px,#f0b0b0 9px,#fff 11px); }
.fi-logo { background: radial-gradient(circle,#e8551f 30%,#2a70b0 60%,#fff 70%); }
.tr.err { color: #d8382e; }
.tr.filler { flex: 1; background: #212121; }
.summary { height: 27px; flex: none; border-top: 1px solid #3d3d3d; display: flex; align-items: center; font-size: 11.500px; letter-spacing: -.2px; }
.summary span { padding: 0 9px 0 9px; border-right: 1px solid #3f4044; height: 16px; line-height: 16px; }
.summary span:first-child { padding-left: 11px; }
.summary span:last-child { border-right: 0; }
.rightfoot { height: 29px; flex: none; background: #383838; display: flex; align-items: center; justify-content: flex-end; padding: 0 15px 9px 0; }
.watermark { font-size: 17px; color: #b2b2b2; line-height: 20px; letter-spacing: .15px; }
```
